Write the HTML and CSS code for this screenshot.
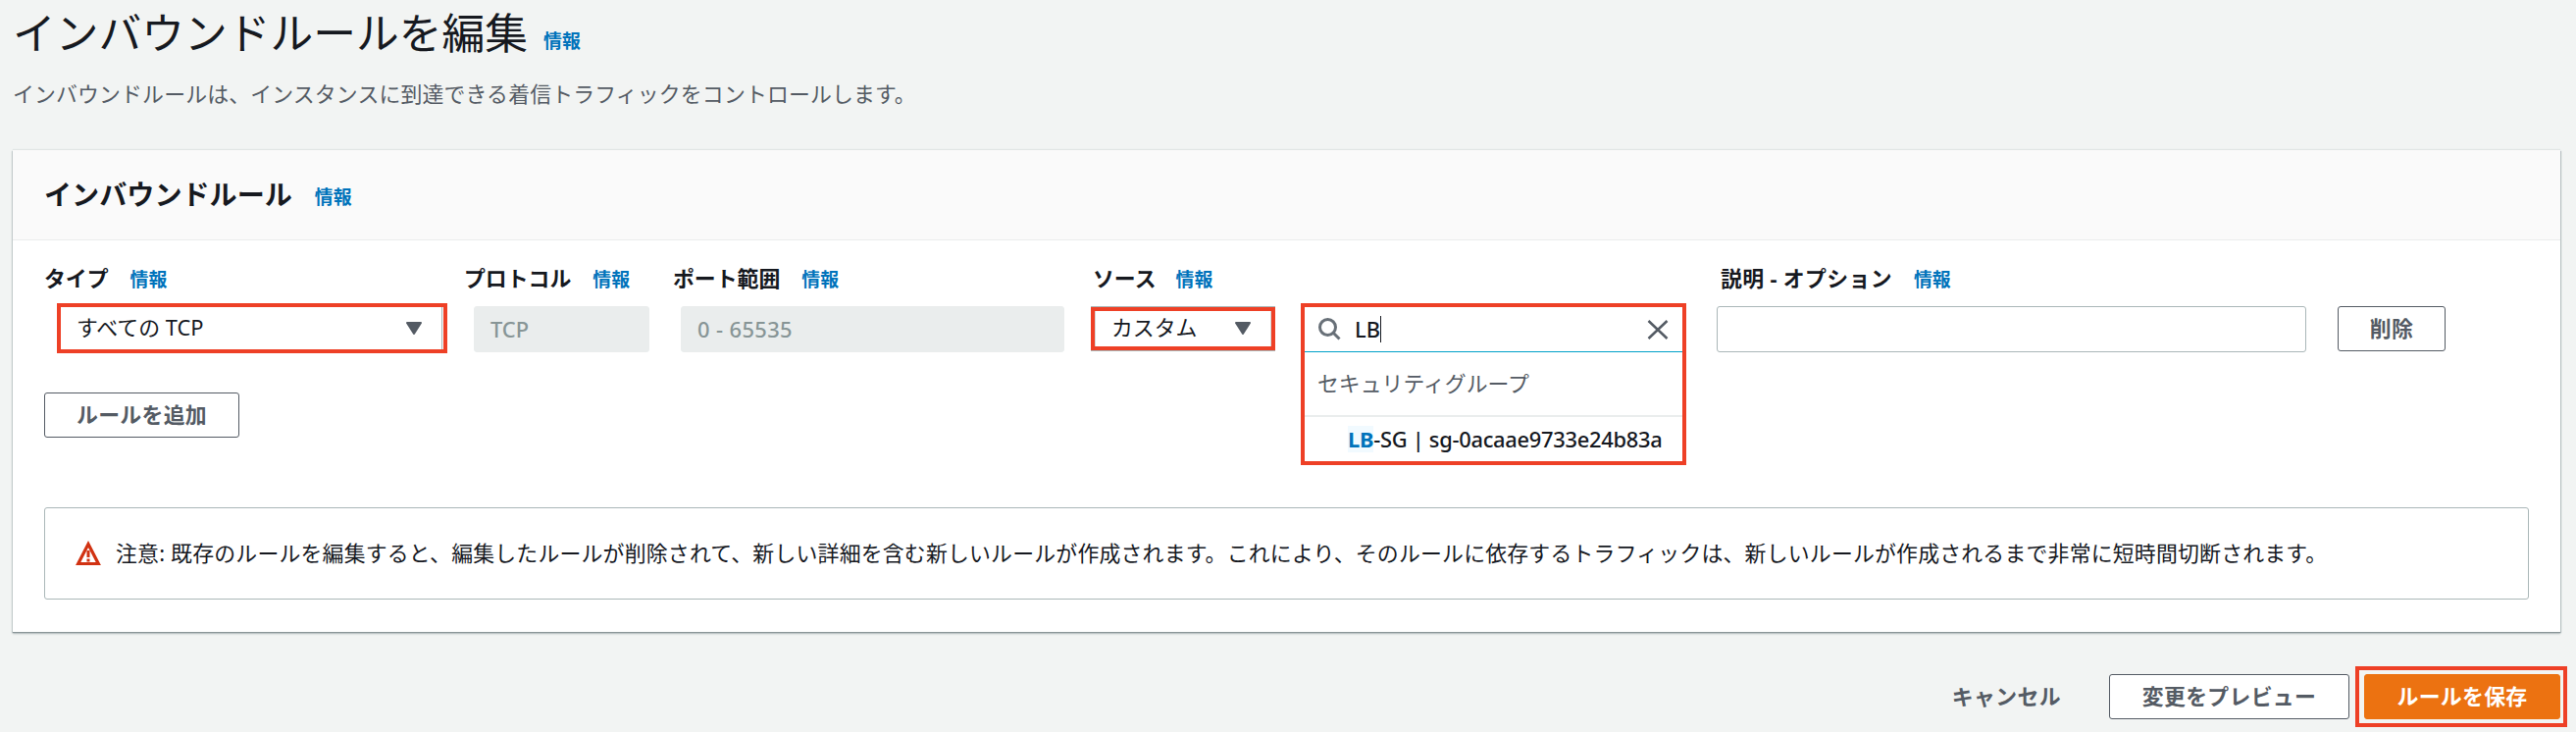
FILE: index.html
```html
<!DOCTYPE html>
<html lang="ja">
<head>
<meta charset="utf-8">
<title>インバウンドルールを編集</title>
<link rel="stylesheet" href="styles.css">
</head>
<body>
<header class="page-header">
  <h1 class="page-title"><span class="title-text">インバウンドルールを編集</span><a class="info">情報</a></h1>
  <p class="description">インバウンドルールは、インスタンスに到達できる着信トラフィックをコントロールします。</p>
</header>
<main class="panel">
  <div class="panel-header"><h2 class="panel-title">インバウンドルール</h2><a class="info">情報</a></div>
  <div class="panel-body">
    <div class="rule">
      <div class="col col-type">
        <div class="label"><span>タイプ</span><a class="info">情報</a></div>
        <div class="select marked select-type"><span>すべての TCP</span><svg class="caret" viewBox="0 0 16 13"><path d="M1 1H15L8 12Z"/></svg></div>
      </div>
      <div class="col col-protocol">
        <div class="label"><span>プロトコル</span><a class="info">情報</a></div>
        <div class="input disabled">TCP</div>
      </div>
      <div class="col col-port">
        <div class="label"><span>ポート範囲</span><a class="info">情報</a></div>
        <div class="input disabled digits">0 - 65535</div>
      </div>
      <div class="col col-source">
        <div class="label"><span>ソース</span><a class="info">情報</a></div>
        <div class="source-controls">
          <div class="select marked select-source"><span>カスタム</span><svg class="caret" viewBox="0 0 16 13"><path d="M1 1H15L8 12Z"/></svg></div>
          <div class="combo marked">
            <div class="search">
              <svg class="icon-search" viewBox="0 0 23 23"><circle cx="9.5" cy="9.5" r="8"/><path d="M15 15L21.5 21.5"/></svg>
              <span class="query">LB</span><span class="cursor"></span>
              <svg class="icon-close" viewBox="0 0 22 20"><path d="M1.5 1L20.5 19M20.5 1L1.5 19"/></svg>
            </div>
            <div class="group">セキュリティグループ</div>
            <div class="option"><span class="match">LB</span><span>-SG | sg-0acaae9733e24b83a</span></div>
          </div>
        </div>
      </div>
      <div class="col col-desc">
        <div class="label"><span>説明 - オプション</span><a class="info">情報</a></div>
        <div class="input"></div>
      </div>
      <button class="button delete">削除</button>
    </div>
    <button class="button add">ルールを追加</button>
    <div class="alert">
      <svg class="icon-warning" viewBox="0 0 26 26"><path class="frame" d="M13 3.5L23.3 23.5H2.7Z"/><path class="mark" d="M13 10V17M13 18.5V21.5"/></svg>
      <span class="alert-text">注意: 既存のルールを編集すると、編集したルールが削除されて、新しい詳細を含む新しいルールが作成されます。これにより、そのルールに依存するトラフィックは、新しいルールが作成されるまで非常に短時間切断されます。</span>
    </div>
  </div>
</main>
<footer class="actions">
  <button class="cancel">キャンセル</button>
  <button class="button preview">変更をプレビュー</button>
  <div class="marked save-frame"><button class="button save">ルールを保存</button></div>
</footer>
</body>
</html>
```
FILE: styles.css
```css
* { box-sizing: border-box; }
body {
  margin: 0;
  width: 2626px;
  height: 746px;
  overflow: hidden;
  background: #f2f4f3;
  color: #16191f;
  font: 21.86px/30px "Noto Sans", "Noto Sans CJK JP", sans-serif;
  white-space: nowrap;
}
h1, h2, p { margin: 0; }
button { font: inherit; padding: 0; white-space: nowrap; }
.info { color: #0073bb; font-size: 18.9px; font-weight: 700; letter-spacing: 0; }
.page-header { height: 153px; padding: 2px 0 0 13px; }
.page-title { display: flex; height: 62px; line-height: 62px; font-weight: 400; font-size: 43.75px; }
.page-title .info { margin-left: 16px; padding-top: 9px; }
.description { margin-top: 17px; color: #545b64; letter-spacing: .16px; }
.panel {
  width: 2597px;
  height: 491px;
  margin-left: 13px;
  background: #fff;
  box-shadow: 0 -1px 1px #e1e5e4, 0 1px 1px #8a9598, 0 2px 2px #bcc3c4, 1px 1px 1px #b8c1c2, -1px 1px 1px #d0d6d6;
}
.panel-header {
  display: flex;
  align-items: center;
  height: 92px;
  padding-left: 32px;
  background: #fafafa;
  border-bottom: 1px solid #eaeded;
}
.panel-title { font-size: 28.1px; font-weight: 700; margin-top: -2px; }
.panel-header .info { margin: 4px 0 0 23px; }
.panel-body { padding: 24px 32px 0; }
.rule { display: flex; height: 131px; }
.col { position: relative; }
.col-type { width: 429px; }
.col-protocol { width: 212px; }
.col-port { width: 428px; }
.col-source { width: 638px; }
.col-desc { width: 633px; }
.label { display: flex; height: 43px; font-weight: 700; font-size: 21.86px; line-height: 30px; }
.label .info { margin-left: 22px; padding-top: 1px; font-size: 18.9px; }
.marked { border: 4px solid #ee4026; }
.select { display: flex; align-items: center; justify-content: space-between; background: #fff; }
.caret { width: 16px; height: 13px; fill: #545b64; stroke: #545b64; stroke-width: 2; stroke-linejoin: round; }
.select-type { width: 398px; height: 51px; margin: -3px 0 0 13px; padding: 0 22px 1px 16px; box-shadow: inset -1px 0 #fff, inset -2px 0 #aab7b8; }
.input { height: 47px; border: 1px solid #aab7b8; border-radius: 3px; background: #fff; padding: 0 16px; line-height: 45px; }
.disabled { border-color: #eaeded; background: #eaeded; color: #879596; font-weight: 500; }
.col-protocol .label { margin-left: -1px; }
.col-protocol .input { width: 179px; margin-left: 9px; }
.col-port .input { width: 391px; margin-left: 8px; }
.digits { letter-spacing: .4px; }
.source-controls { display: flex; }
.col-source { margin-left: -2px; }
.col-source .label { padding-left: 2px; }
.col-source .label .info { margin-left: 20px; }
.select-source { width: 188px; height: 44px; margin: 1px 0 0; padding: 0 21px 2px 17px; box-shadow: 0 -1px #aab7b8, 0 1px #aab7b8, inset 1px 0 #d5dbdb, inset -1px 0 #d5dbdb; }
.combo { position: absolute; left: 214px; top: 40px; width: 393px; height: 165px; background: #fff; }
.search { display: flex; align-items: center; height: 46px; padding: 0 14px; border-bottom: 1px solid #00a1c9; }
.icon-search { width: 23px; height: 23px; fill: none; stroke: #687078; stroke-width: 3; }
.query { margin-left: 14px; font-weight: 500; }
.cursor { width: 1px; height: 27px; background: #16191f; }
.icon-close { width: 22px; height: 20px; margin-left: auto; fill: none; stroke: #545b64; stroke-width: 2.5; }
.group { height: 66px; padding-left: 13px; line-height: 64px; color: #545b64; border-bottom: 2px solid #eaeded; }
.option { display: flex; align-items: center; height: 45px; padding: 0 0 0 44px; font-weight: 500; letter-spacing: -.28px; }
.match { height: 27px; line-height: 27px; background: #f1faff; color: #0073bb; font-weight: 700; }
.col-desc .label { padding-left: 4px; letter-spacing: .35px; }
.col-desc .input { width: 601px; }
.button { border: 1px solid #545b64; border-radius: 3px; background: #fff; color: #545b64; font-weight: 700; height: 46px; line-height: 42px; text-align: center; letter-spacing: .3px; }
.delete { width: 110px; margin-top: 43px; }
.add { display: block; width: 199px; }
.alert { display: flex; align-items: center; width: 2533px; height: 94px; margin-top: 71px; padding-left: 31px; border: 1px solid #aab7b8; border-radius: 3px; }
.alert-text { letter-spacing: .21px; }
.icon-warning { width: 26px; height: 26px; margin-right: 15px; fill: none; stroke: #d13212; }
.frame { stroke-width: 3.2; }
.mark { stroke-width: 3; }
.actions { display: flex; justify-content: flex-end; align-items: center; height: 62px; margin: 35px 9px 0 0; }
.cancel { border: 0; background: none; color: #545b64; font-weight: 700; margin-right: 49px; letter-spacing: .4px; }
.preview { width: 245px; margin-right: 6px; }
.save-frame { width: 216px; height: 62px; padding: 4px 3px 0 5px; }
.save { width: 200px; border-color: #ec7211; background: #ec7211; color: #fff; display: block; }
```
